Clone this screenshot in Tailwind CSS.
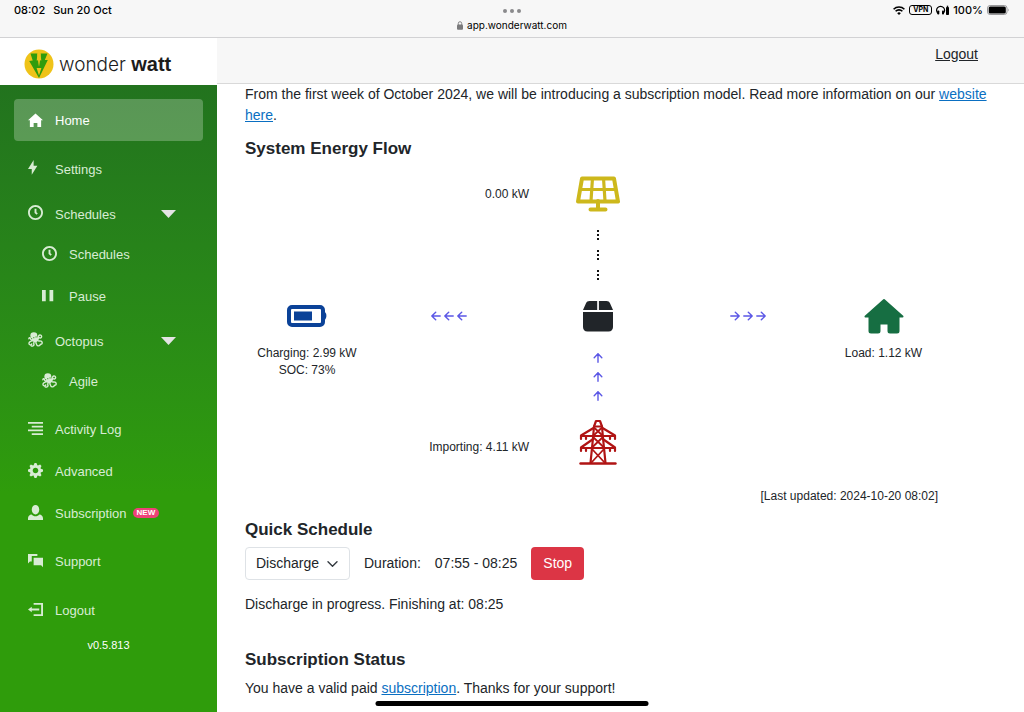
<!DOCTYPE html>
<html lang="en">
<head>
  <meta charset="UTF-8">
  <meta name="viewport" content="width=device-width, initial-scale=1.0">
  <title>Wonder Watt - Home</title>
  <script src="https://cdn.jsdelivr.net/npm/@tailwindcss/browser@4"></script>
</head>
<body class="relative flex flex-col min-h-screen bg-white text-[#212529] text-[14px] leading-[21px] font-['Liberation_Sans',Arial,sans-serif]">

  <!-- Shared icons -->
  <svg class="hidden">
    <symbol id="clock" viewBox="0 0 8 8"><path d="M4 0c-2.2 0-4 1.8-4 4s1.8 4 4 4 4-1.8 4-4-1.8-4-4-4zm0 1c1.66 0 3 1.34 3 3s-1.34 3-3 3-3-1.34-3-3 1.34-3 3-3zm-.5 1v2.22l.16.13.5.5.34.38.72-.72-.38-.34-.34-.34v-1.81h-1z"/></symbol>
    <symbol id="octopus" viewBox="0 0 16 16">
      <ellipse cx="6.200" cy="3.600" rx="3.700" ry="3.400"/>
      <path d="M4 5l5.300-2 2.200 5.500-3 2.500-3.500-2z"/>
      <path d="M6 7.500C4.500 9 2.500 8.600 2.600 6.800 2.500 5.800 1 6 .9 7.200M6.500 9C4.500 9.200 1.200 9.500 1 12c0 2 2.600 2.400 3 .8M7.500 9.500c-1.700 1.200-1.500 2.500-1.200 3.500.4 1.800-1.800 2.600-3 1.700M8.500 9.500c-.5 2.500.5 3 .8 4 .6 1.800 3.700 1.700 3.700-.3M10 9c1.500 1.200 2.500.2 4 .8 1.800 1 1.300 3.200-.3 3.200M10 7.500c1.500 0 1.600-1.200 1.300-2.300-.3-2.600 3-2.700 3.200-.6.100 1.500-1 2-1.800 1.600" fill="none" stroke="currentColor" stroke-width="1.500" stroke-linecap="round"/>
      <circle cx="6.200" cy="6" r=".6" fill="#2a8a15"/><circle cx="8.600" cy="5.200" r=".6" fill="#2a8a15"/>
    </symbol>
    <symbol id="arrow" viewBox="0 0 10 10"><path d="M.8 5h8.400M5.300 1.200L9.200 5 5.300 8.800" fill="none" stroke="#5b57e6" stroke-width="1.400" stroke-linecap="round" stroke-linejoin="round"/></symbol>
    <symbol id="dots" viewBox="0 0 4 12"><path d="M1 1h2v2H1zM1 5h2v2H1zM1 9h2v2H1z" fill="#111"/></symbol>
  </svg>

  <!-- Browser bar -->
  <div class="grid grid-cols-[1fr_auto_1fr] h-[38px] px-3.5 bg-[#f7f7f7] border-b border-[#d2d2d4] text-[11px] leading-[20px] font-medium text-black font-['Inter',sans-serif]">
    <div class="flex gap-2"><span>08:02</span><span>Sun 20 Oct</span></div>
    <div class="flex flex-col items-center">
      <svg class="w-[18px] h-[4px] mt-[9px]" viewBox="0 0 18 4" fill="#8a8a8c"><circle cx="2" cy="2" r="2"/><circle cx="9" cy="2" r="2"/><circle cx="16" cy="2" r="2"/></svg>
      <div class="flex items-center gap-1 h-[24px] text-[10px] font-normal">
        <svg class="w-[6px] h-[9px]" viewBox="0 0 6 9" fill="#7a7a7c"><rect y="3.600" width="6" height="5.200" rx="1"/><path d="M1.300 4V2.400a1.700 1.700 0 0 1 3.400 0V4" fill="none" stroke="#7a7a7c" stroke-width=".9"/></svg>
        <span>app.wonderwatt.com</span>
      </div>
    </div>
    <div class="flex items-center justify-end gap-1 h-[20px]">
      <svg class="w-[12px] h-[9px]" viewBox="0 0 12 9" fill="none" stroke="#000" stroke-width="1.600"><path d="M.6 3.300a7.600 7.600 0 0 1 10.800 0M2.600 5.300a4.800 4.800 0 0 1 6.800 0"/><path d="M6 9L4.200 7.200a2.500 2.500 0 0 1 3.600 0z" fill="#000" stroke="none"/></svg>
      <span class="px-[3px] border border-black rounded-[3px] text-[7px] leading-[8px] font-bold">VPN</span>
      <svg class="w-[13px] h-[10px]" viewBox="0 0 13 10"><path d="M2.200 8.500A4 4 0 1 1 7 8.500" fill="none" stroke="#000" stroke-width="1.200"/><rect x="1.300" y="5.500" width="2" height="4" rx=".8"/><rect x="6" y="5.500" width="2" height="4" rx=".8"/><rect x="10" y="2" width="3" height="8" rx=".8"/><rect x="10.800" y=".7" width="1.400" height="1.200"/></svg>
      <span>100%</span>
      <svg class="w-[23px] h-[10px]" viewBox="0 0 23 10"><rect x=".5" y=".5" width="19.500" height="9" rx="2.600" fill="none" stroke="#98989a"/><rect x="1.700" y="1.600" width="17.100" height="6.800" rx="1.500"/><path d="M21 3.500a2 2 0 0 1 0 3z" fill="#98989a"/></svg>
    </div>
  </div>

  <div class="flex grow">
    <!-- Sidebar -->
    <aside class="flex flex-col w-[217px] shrink-0">
      <a href="#" class="flex items-center gap-[5px] h-[47px] pl-6 pt-[5px] text-[#1c1c1c]">
        <svg class="w-[30px] h-[30px]" viewBox="0 0 30 30">
          <circle cx="15" cy="15" r="14.500" fill="#efc319"/>
          <path d="M6.500 4.500h7l-.8 7 1.800-.2.500 6.700.5-6.700 1.800.2-.8-7h7l-2.700 6.500h3L15 29 5.200 12l3.500-.5z" fill="#2f9c0d"/>
          <path d="M13.200 4.500h3.600L15 17.500zM12.600 19h4.800L15 26.500z" fill="#efc319"/>
        </svg>
        <span class="text-[19px] font-light font-['Inter',sans-serif]">wonder <b class="text-[20px] font-bold font-['Liberation_Sans',sans-serif]">watt</b></span>
      </a>
      <nav class="grow px-3.5 pt-3.5 bg-linear-to-b from-[#22731e] to-[#2f9c0b] to-65% text-[13px] text-[#d8ecd4]">
        <ul>
          <li><a href="#" class="flex items-center gap-3 h-[42px] pl-3.5 rounded bg-white/25 text-white">
            <svg class="w-[15px] h-[15px]" viewBox="0 0 8 8" fill="currentColor"><path d="M4 .3l-4 3.500h1v3.700h2v-2.200h2v2.200h2V3.800h1z"/></svg>Home</a></li>
          <li class="mt-[7px]"><a href="#" class="flex items-center gap-3 h-[42px] pl-3.5">
            <svg class="w-[15px] h-[15px] mb-1" viewBox="0 0 8 8" fill="currentColor"><path d="M3 0l-3 4.800h2v3l3-4.800h-2v-3z"/></svg>Settings</a></li>
          <li class="mt-[5px]">
            <button type="button" class="flex items-center gap-3 w-full h-[38px] pl-3.5 pr-[27px]">
              <svg class="w-[15px] h-[15px] mb-1" fill="currentColor"><use href="#clock"/></svg>Schedules
              <svg class="w-[15px] h-[8px] ml-auto" viewBox="0 0 15 8" fill="#e4e4e4"><path d="M0 0h15L7.500 8z"/></svg>
            </button>
            <ul class="pl-3.5">
              <li><a href="#" class="flex items-center gap-3 h-[42px] pl-3.5"><svg class="w-[15px] h-[15px] mb-0.5" fill="currentColor"><use href="#clock"/></svg>Schedules</a></li>
              <li><a href="#" class="flex items-center gap-3 h-[42px] pl-3.5"><svg class="w-[15px] h-[15px] mb-0.5" viewBox="0 0 8 8" fill="currentColor"><path d="M0 1h2v6H0zM4 1h2v6H4z"/></svg>Pause</a></li>
            </ul>
          </li>
          <li class="mt-[5px]">
            <button type="button" class="flex items-center gap-3 w-full h-[38px] pl-3.5 pr-[27px]">
              <svg class="w-[15px] h-[15px] mb-1" fill="currentColor"><use href="#octopus"/></svg>Octopus
              <svg class="w-[15px] h-[8px] ml-auto" viewBox="0 0 15 8" fill="#e4e4e4"><path d="M0 0h15L7.500 8z"/></svg>
            </button>
            <ul class="pl-3.5">
              <li><a href="#" class="flex items-center gap-3 h-[42px] pl-3.5"><svg class="w-[15px] h-[15px] mb-0.5" fill="currentColor"><use href="#octopus"/></svg>Agile</a></li>
            </ul>
          </li>
          <li class="mt-[7px]"><a href="#" class="flex items-center gap-3 h-[41px] pl-3.5">
            <svg class="w-[15px] h-[15px] mb-0.5" viewBox="0 0 8 8" fill="currentColor"><path d="M0 .5h8v1H0zM2 2.500h6v1H2zM0 4.500h8v1H0zM2 6.500h6v1H2z"/></svg>Activity Log</a></li>
          <li><a href="#" class="flex items-center gap-3 h-[42px] pl-3.5">
            <svg class="w-[15px] h-[15px] mb-0.5" viewBox="0 0 8 8" fill="currentColor"><path d="M3.500 0l-.5 1.190c-.1.030-.190.080-.280.130l-1.190-.5-.720.720.5 1.190c-.050.1-.090.180-.130.280l-1.190.5v1l1.190.5c.040.1.080.180.130.280l-.5 1.190.720.720 1.190-.5c.090.040.180.090.280.130l.5 1.190h1l.5-1.190c.090-.040.190-.080.280-.130l1.190.5.720-.720-.5-1.190c.040-.090.090-.190.130-.280l1.190-.5v-1l-1.190-.5c-.030-.090-.080-.190-.130-.280l.5-1.190-.720-.720-1.190.5c-.090-.040-.190-.090-.280-.130l-.5-1.190h-1zm.5 2.500c.830 0 1.500.670 1.500 1.500s-.670 1.500-1.500 1.500-1.500-.670-1.500-1.500.670-1.500 1.500-1.500z"/></svg>Advanced</a></li>
          <li><a href="#" class="flex items-center gap-3 h-[42px] pl-3.5">
            <svg class="w-[15px] h-[15px] mb-0.5" viewBox="0 0 8 8" fill="currentColor"><path d="M4 0c-1.100 0-2 1.120-2 2.500s.9 2.500 2 2.500 2-1.120 2-2.500-.9-2.500-2-2.500zm-2.090 5c-1.060.050-1.910.920-1.910 2v1h8v-1c0-1.080-.840-1.950-1.910-2-.540.610-1.280 1-2.090 1-.810 0-1.550-.390-2.090-1z"/></svg>
            <span class="flex items-center gap-1.5">Subscription <span class="px-1 rounded-full bg-[#ee4278] text-white text-[8px] leading-[10px] font-bold">NEW</span></span></a></li>
          <li class="mt-[7px]"><a href="#" class="flex items-center gap-3 h-[41px] pl-3.5">
            <svg class="w-[15px] h-[15px]" viewBox="0 0 8 8" fill="currentColor"><path d="M0 0v5l1-1h1v-3h3v-1h-5zm3 2v4h4l1 1v-5h-5z"/></svg>Support</a></li>
          <li class="mt-[7px]"><a href="#" class="flex items-center gap-3 h-[42px] pl-3.5">
            <svg class="w-[15px] h-[15px] mb-0.5" viewBox="0 0 8 8" fill="currentColor"><path d="M3 .5v1h4v5h-4v1h5v-7h-5zm-1 2l-2 1.500 2 1.500v-1h4v-1h-4v-1z"/></svg>Logout</a></li>
        </ul>
        <p class="mt-1 text-center text-[11px] text-white">v0.5.813</p>
      </nav>
    </aside>

    <!-- Page -->
    <main class="grow min-w-0">
      <header class="flex justify-end h-[46px] pt-1.5 pr-[46px] bg-[#f7f7f7] border-b border-[#d9d9d9]">
        <a href="#" class="underline">Logout</a>
      </header>

      <div class="px-7">
        <p>From the first week of October 2024, we will be introducing a subscription model. Read more information on our <a href="#" class="text-[#0a6fc2] underline">website here</a>.</p>

        <h2 class="mt-2 text-[17px] leading-[29px] font-bold">System Energy Flow</h2>
        <div class="mr-[58px]">
          <div class="grid grid-cols-[124fr_160fr_138fr_162fr_109fr] grid-rows-[62px_60px_62px_60px_70px] items-center justify-items-center text-[12px] leading-[17px]">
            <p class="col-start-2 justify-self-end">0.00 kW</p>
            <svg class="w-[44px] h-[36px]" viewBox="0 0 44 36" fill="none" stroke="#cdb81c">
              <path d="M6 2.500h32l4 23H2z" stroke-width="4" stroke-linejoin="round"/>
              <path d="M4 13.500h36M16.500 2L15 25M27.500 2L29 25" stroke-width="3.200"/>
              <path d="M22 25v8M14.500 33.500h15" stroke-width="4" stroke-linecap="round"/>
            </svg>

            <div class="col-start-3 row-start-2 flex flex-col gap-2">
              <svg class="w-[4px] h-[12px]"><use href="#dots"/></svg>
              <svg class="w-[4px] h-[12px]"><use href="#dots"/></svg>
              <svg class="w-[4px] h-[12px]"><use href="#dots"/></svg>
            </div>

            <svg class="col-start-1 row-start-3 w-[40px] h-[22px]" viewBox="0 0 40 22">
              <rect x="2" y="2" width="34" height="18" rx="3" fill="none" stroke="#0b4298" stroke-width="4"/>
              <path d="M36 6.500c5 0 4 9 0 9z" fill="#0b4298"/><rect x="7" y="6.500" width="18" height="9" fill="#0b4298"/>
            </svg>
            <div class="row-start-3 flex gap-[3px] rotate-180">
              <svg class="w-[10px] h-[10px]"><use href="#arrow"/></svg>
              <svg class="w-[10px] h-[10px]"><use href="#arrow"/></svg>
              <svg class="w-[10px] h-[10px]"><use href="#arrow"/></svg>
            </div>
            <svg class="row-start-3 w-[32px] h-[32px]" viewBox="0 0 32 32" fill="#212529">
              <path d="M7.500 1h7.700v9H1L4 3.200C4.700 1.700 5.800 1 7.500 1zM16.900 1h7.600c1.700 0 2.800.7 3.500 2.200L31 10H16.900zM1 12h30v15c0 2.700-1.600 4.500-4.500 4.500h-21C2.600 31.500 1 29.700 1 27z"/>
            </svg>
            <div class="row-start-3 flex gap-[3px]">
              <svg class="w-[10px] h-[10px]"><use href="#arrow"/></svg>
              <svg class="w-[10px] h-[10px]"><use href="#arrow"/></svg>
              <svg class="w-[10px] h-[10px]"><use href="#arrow"/></svg>
            </div>
            <svg class="row-start-3 w-[40px] h-[36px]" viewBox="0 0 40 36" fill="#166e42" stroke="#166e42" stroke-width="2" stroke-linejoin="round">
              <path d="M20 2L1.500 18.500h4V33c0 1 .5 1.500 1.500 1.500h7c1 0 1.500-.5 1.500-1.500v-7.500h9V33c0 1 .5 1.500 1.500 1.500h7c1 0 1.500-.5 1.500-1.500V18.500h4z"/>
            </svg>

            <p class="col-start-1 row-start-4 -mt-0.5 self-start whitespace-nowrap text-center">Charging: 2.99 kW<br>SOC: 73%</p>
            <div class="col-start-3 row-start-4 flex flex-col gap-[9px]">
              <svg class="w-[10px] h-[10px] -rotate-90"><use href="#arrow"/></svg>
              <svg class="w-[10px] h-[10px] -rotate-90"><use href="#arrow"/></svg>
              <svg class="w-[10px] h-[10px] -rotate-90"><use href="#arrow"/></svg>
            </div>
            <p class="col-start-5 row-start-4 -mt-0.5 self-start whitespace-nowrap">Load: 1.12 kW</p>

            <p class="col-start-2 row-start-5 justify-self-end pt-2.5">Importing: 4.11 kW</p>
            <svg class="col-start-3 row-start-5 w-[38px] h-[46px]" viewBox="0 0 38 46" fill="none" stroke="#b01414" stroke-width="2.200" stroke-linejoin="round" stroke-linecap="round">
              <path d="M1.500 44.500h35" stroke-width="2.400"/>
              <path d="M11.500 44l2.500-25 1-11.500L17 2h4l2 5.500L24 19l2.500 25"/>
              <path d="M15 7.500h8M14.500 9L2 16.500v3.500M23.500 9L36 16.500v3.500M2 17h34M7 17v3M31 17v3"/>
              <path d="M13.500 20.500L2 28.500V32M24.500 20.500L36 28.500V32M2 29h34M7 29v3M31 29v3"/>
              <path d="M15 8.500l8.500 8M23 8.500l-8.500 8M14 18l11 10.500M24 18L13 28.500M13 30l13 14M25 30L12 44" stroke-width="1.800"/>
            </svg>
          </div>
          <p class="mt-2.5 text-right text-[12px] leading-[18px]">[Last updated: 2024-10-20 08:02]</p>
        </div>

        <h2 class="mt-2.5 text-[17px] leading-[29px] font-bold">Quick Schedule</h2>
        <form class="flex items-center gap-3.5 mt-[3px]">
          <div class="relative">
            <select aria-label="Action" class="appearance-none w-[105px] h-[33px] pl-2.5 border border-[#dee2e6] rounded bg-white">
              <option>Discharge</option>
              <option>Charge</option>
            </select>
            <svg class="absolute right-3 top-3 w-[11px] h-[10px] pointer-events-none" viewBox="0 0 11 10" fill="none" stroke="#343a40" stroke-width="1.400" stroke-linecap="round" stroke-linejoin="round"><path d="M1 2.800l4.500 4.400L10 2.800"/></svg>
          </div>
          <span>Duration:</span>
          <span>07:55 - 08:25</span>
          <button type="button" class="h-[33px] px-3 rounded bg-[#dc3545] text-white">Stop</button>
        </form>
        <p class="mt-3.5">Discharge in progress. Finishing at: 08:25</p>

        <h2 class="mt-[30px] text-[17px] leading-[29px] font-bold">Subscription Status</h2>
        <p class="mt-1">You have a valid paid <a href="#" class="text-[#0a6fc2] underline">subscription</a>. Thanks for your support!</p>
      </div>
    </main>
  </div>

  <!-- Home indicator -->
  <div class="absolute bottom-1.5 left-1/2 w-[273px] h-[5px] -translate-x-1/2 rounded-full bg-black"></div>
</body>
</html>
